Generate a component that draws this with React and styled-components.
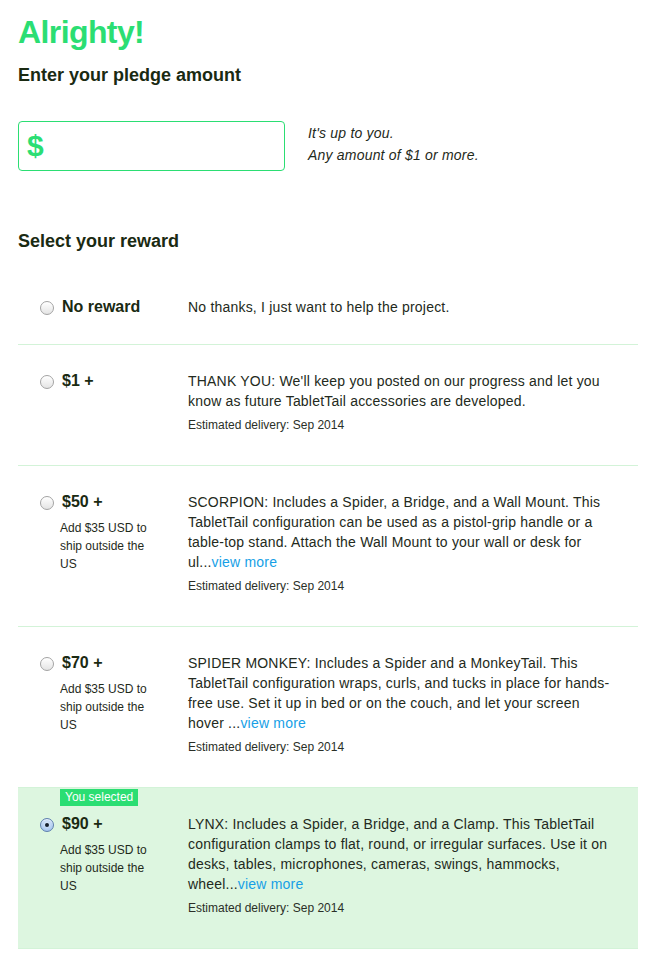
import styled, { createGlobalStyle } from "styled-components";

const rewards = [
  {
    id: "none",
    label: "No reward",
    text: "No thanks, I just want to help the project.",
  },
  {
    id: "1",
    label: "$1 +",
    text: "THANK YOU: We'll keep you posted on our progress and let you know as future TabletTail accessories are developed.",
    delivery: "Sep 2014",
  },
  {
    id: "50",
    label: "$50 +",
    note: "Add $35 USD to ship outside the US",
    text: "SCORPION: Includes a Spider, a Bridge, and a Wall Mount. This TabletTail configuration can be used as a pistol-grip handle or a table-top stand. Attach the Wall Mount to your wall or desk for ul...",
    more: true,
    delivery: "Sep 2014",
  },
  {
    id: "70",
    label: "$70 +",
    note: "Add $35 USD to ship outside the US",
    text: "SPIDER MONKEY: Includes a Spider and a MonkeyTail. This TabletTail configuration wraps, curls, and tucks in place for hands-free use. Set it up in bed or on the couch, and let your screen hover ...",
    more: true,
    delivery: "Sep 2014",
  },
  {
    id: "90",
    label: "$90 +",
    note: "Add $35 USD to ship outside the US",
    text: "LYNX: Includes a Spider, a Bridge, and a Clamp. This TabletTail configuration clamps to flat, round, or irregular surfaces. Use it on desks, tables, microphones, cameras, swings, hammocks, wheel...",
    more: true,
    delivery: "Sep 2014",
  },
];

export default function App() {
  const selected = "90";

  return (
    <>
      <GlobalStyle />
      <Page>
        <Title>Alrighty!</Title>
        <Heading>Enter your pledge amount</Heading>
        <PledgeRow>
          <AmountBox>
            <Dollar>$</Dollar>
          </AmountBox>
          <Hint>
            It's up to you.
            <br />
            Any amount of $1 or more.
          </Hint>
        </PledgeRow>

        <Heading $spaced>Select your reward</Heading>
        <RewardList>
          {rewards.map((r, i) => {
            const isSelected = r.id === selected;
            return (
              <Reward key={r.id} $selected={isSelected} $first={i === 0}>
                {isSelected && <Badge>You selected</Badge>}
                <Amount>
                  <AmountLine>
                    <Radio type="radio" checked={isSelected} readOnly />
                    <AmountLabel>{r.label}</AmountLabel>
                  </AmountLine>
                  {r.note && <ShipNote>{r.note}</ShipNote>}
                </Amount>
                <Description>
                  <p>
                    {r.text}
                    {r.more && <MoreLink href="#">view more</MoreLink>}
                  </p>
                  {r.delivery && (
                    <Delivery>Estimated delivery: {r.delivery}</Delivery>
                  )}
                </Description>
              </Reward>
            );
          })}
        </RewardList>
      </Page>
    </>
  );
}

const GlobalStyle = createGlobalStyle`
  body {
    margin: 0;
    background: #fff;
    font-family: "Liberation Sans", Arial, Helvetica, sans-serif;
    color: #1c2a17;
  }
  p {
    margin: 0;
  }
`;

const Page = styled.div`
  padding: 14px 14px 0 18px;
`;

const Title = styled.h1`
  margin: 0;
  font-size: 32px;
  line-height: 36px;
  font-weight: bold;
  color: #2bde73;
  letter-spacing: -0.6px;
`;

const Heading = styled.h2`
  margin: ${(p) => (p.$spaced ? "59px" : "14px")} 0 0;
  font-size: 18px;
  line-height: 22px;
  font-weight: bold;
  color: #1a2a12;
`;

const PledgeRow = styled.div`
  display: flex;
  align-items: flex-start;
  gap: 23px;
  margin-top: 35px;
`;

const AmountBox = styled.div`
  box-sizing: border-box;
  width: 267px;
  height: 50px;
  border: 1px solid #2bde73;
  border-radius: 4px;
  display: flex;
  align-items: center;
  padding-left: 8px;
`;

const Dollar = styled.span`
  font-size: 30px;
  font-weight: bold;
  color: #2bde73;
  line-height: 1;
`;

const Hint = styled.p`
  margin-top: 1px;
  font-size: 14px;
  line-height: 22px;
  font-style: italic;
  letter-spacing: 0.2px;
  color: #1f2a1b;
`;

const RewardList = styled.div`
  width: 620px;
  margin-top: 18px;
`;

const Reward = styled.div`
  position: relative;
  display: flex;
  padding: ${(p) => (p.$first ? "27px" : "26px")} 18px
    ${(p) => (p.$first ? "27px" : "32px")} 22px;
  border-top: ${(p) => (p.$first ? "none" : "1px solid #d3f3d8")};
  border-bottom: ${(p) => (p.$selected ? "1px solid #d3f3d8" : "none")};
  background: ${(p) => (p.$selected ? "#ddf6e0" : "transparent")};
`;

const Badge = styled.span`
  position: absolute;
  top: 1px;
  left: 42px;
  height: 17px;
  padding: 0 5px;
  background: #2bde73;
  color: #fff;
  font-size: 12px;
  line-height: 17px;
`;

const Amount = styled.div`
  width: 148px;
  flex-shrink: 0;
`;

const AmountLine = styled.div`
  display: flex;
  align-items: center;
  gap: 8px;
  height: 20px;
`;

const Radio = styled.input`
  appearance: none;
  box-sizing: border-box;
  width: 14px;
  height: 14px;
  margin: 1px 0 0;
  border-radius: 50%;
  border: 1px solid #a3a3a3;
  background: linear-gradient(#ffffff, #e4e4e4);
  box-shadow: inset 0 1px 1px rgba(255, 255, 255, 0.8);
  position: relative;
  &:checked {
    border-color: #5d7fae;
    background: radial-gradient(circle at 50% 40%, #e2eefc 0%, #a9c8f0 70%, #86aee3 100%);
  }
  &:checked::after {
    content: "";
    position: absolute;
    left: 50%;
    top: 50%;
    width: 4px;
    height: 4px;
    margin: -2px 0 0 -2px;
    border-radius: 50%;
    background: #16202e;
  }
`;

const AmountLabel = styled.span`
  font-size: 16px;
  font-weight: bold;
  line-height: 22px;
  color: #1a2a12;
`;

const ShipNote = styled.p`
  margin: 7px 0 0 20px;
  max-width: 96px;
  font-size: 12px;
  line-height: 18px;
  color: #1f2a1b;
`;

const Description = styled.div`
  max-width: 424px;
  font-size: 14px;
  line-height: 20px;
  letter-spacing: 0.2px;
  color: #232a20;
`;

const MoreLink = styled.a`
  color: #169fe6;
  text-decoration: none;
`;

const Delivery = styled.p`
  margin-top: 6px;
  font-size: 12px;
  line-height: 16px;
  letter-spacing: 0;
  color: #2a2f27;
`;
